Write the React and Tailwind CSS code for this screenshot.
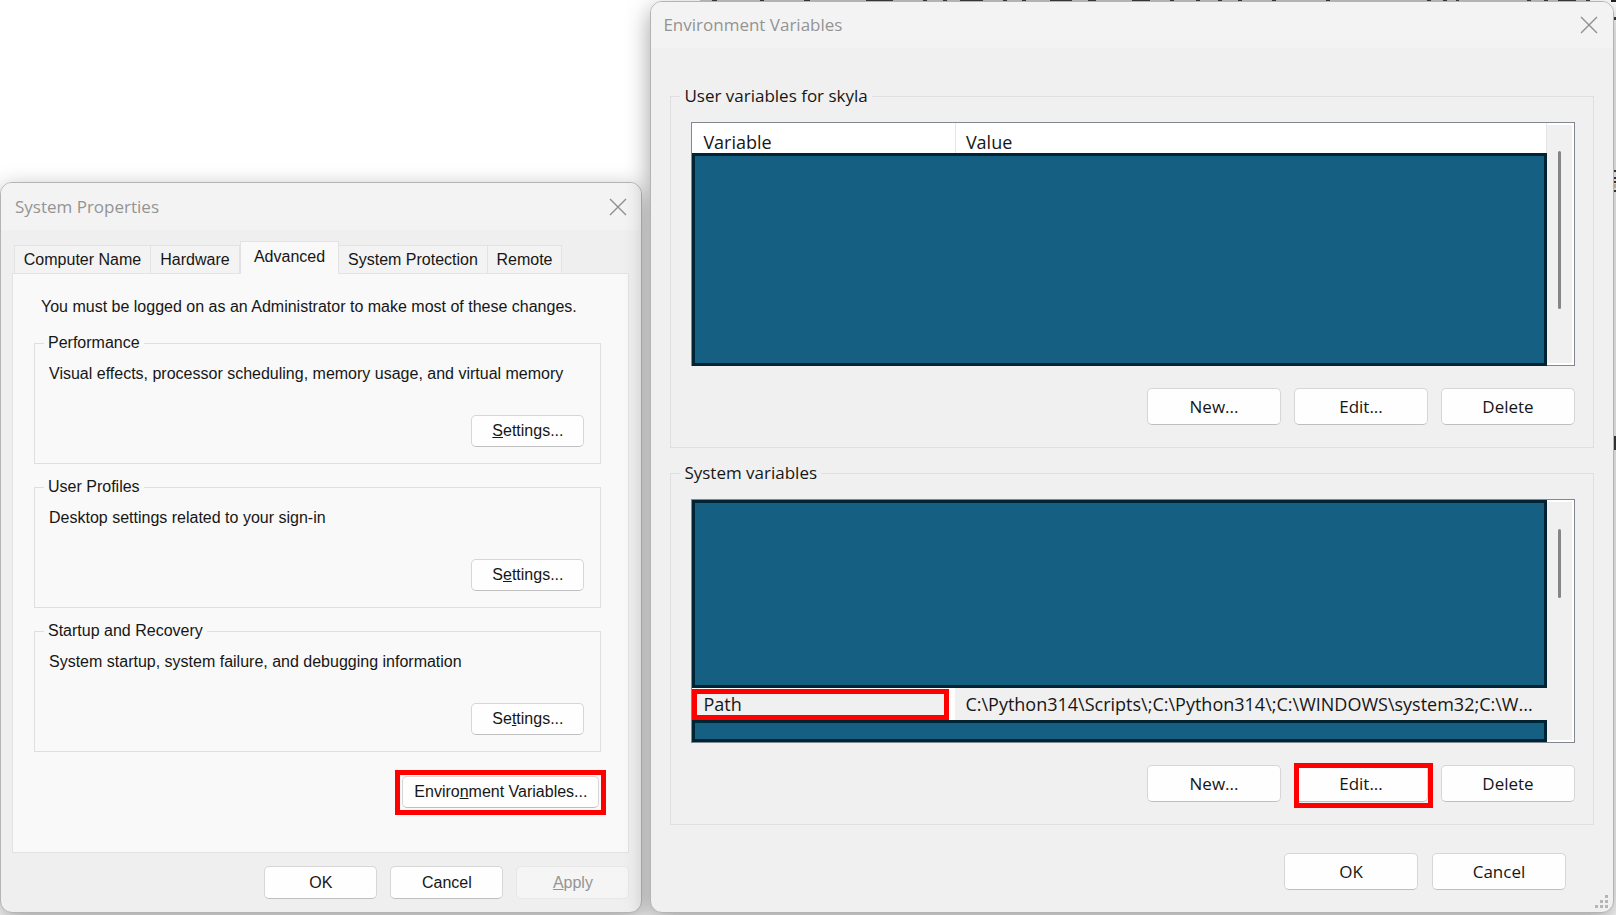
const dialogButton =
  "flex items-center justify-center rounded-[5px] border border-[#d6d6d6] border-b-[#bfbfbf] bg-[#fefefe]";

function CloseIcon() {
  return (
    <svg viewBox="0 0 18 18" className="h-[18px] w-[18px]" fill="none" stroke="#8f8f8f" strokeWidth="1.4" aria-hidden="true">
      <path d="M1 1 17 17M17 1 1 17" />
    </svg>
  );
}

function TitleBar({ title, className }) {
  return (
    <header className={`flex items-center justify-between bg-[#f3f3f3] font-['Open_Sans','Noto_Sans',sans-serif] text-[17px] text-[#949494] ${className}`}>
      <h1>{title}</h1>
      <button type="button" aria-label={`Close ${title}`}>
        <CloseIcon />
      </button>
    </header>
  );
}

function SettingsGroup({ title, description, label }) {
  return (
    <fieldset className="mb-[11px] flex h-[133px] flex-col border border-[#dfdfdf]">
      <legend className="ml-[9px] px-1 leading-6">{title}</legend>
      <div className="flex h-[108px] flex-col justify-between pb-4 pl-[14px] pr-4 pt-[7px]">
        <p className="leading-6">{description}</p>
        <button type="button" className={`${dialogButton} h-8 w-[113px] self-end`}>
          <span>{label}</span>
        </button>
      </div>
    </fieldset>
  );
}

function SystemProperties() {
  const tab = "h-[28px] border border-b-0 border-[#e3e3e3] bg-[#f3f3f3]";
  return (
    <section className="relative self-end overflow-hidden rounded-xl border border-[#b4b4b4] bg-[#efefef] font-['Liberation_Sans',Arial,sans-serif] text-base text-[#161616] shadow-[0_8px_24px_rgba(0,0,0,0.38)]">
      <TitleBar title="System Properties" className="h-[47px] pl-[14px] pr-[14px]" />
      <nav className="flex h-[43px] items-end pl-[13px]" role="tablist">
        <button type="button" role="tab" className={`${tab} w-[137px]`}>Computer Name</button>
        <button type="button" role="tab" className={`${tab} w-[89px] border-l-0`}>Hardware</button>
        <button type="button" role="tab" aria-selected="true" className="relative z-10 -mb-px h-[33px] w-[99px] border-x border-t border-[#e3e3e3] bg-[#f9f9f9] pb-[2px]">
          Advanced
        </button>
        <button type="button" role="tab" className={`${tab} w-[149px] border-l-0`}>System Protection</button>
        <button type="button" role="tab" className={`${tab} w-[74px] border-l-0`}>Remote</button>
      </nav>
      <div className="ml-[11px] mr-3 border border-[#e3e3e3] bg-[#f9f9f9] pb-[37px] pl-[21px] pr-[27px] pt-5">
        <p className="mb-[11px] pl-[7px] leading-[26px]">
          You must be logged on as an Administrator to make most of these changes.
        </p>
        <SettingsGroup
          title="Performance"
          description="Visual effects, processor scheduling, memory usage, and virtual memory"
          label={<><u>S</u>ettings...</>}
        />
        <SettingsGroup
          title="User Profiles"
          description="Desktop settings related to your sign-in"
          label={<>S<u>e</u>ttings...</>}
        />
        <SettingsGroup
          title="Startup and Recovery"
          description="System startup, system failure, and debugging information"
          label={<>Se<u>t</u>tings...</>}
        />
        <div className="-mr-[5px] mt-[18px] flex justify-end">
          <div className="border-[5px] border-[#ff0000] px-[2px] pb-[2px] pt-px">
            <button type="button" className={`${dialogButton} h-8 w-[197px]`}>
              <span>Enviro<u>n</u>ment Variables...</span>
            </button>
          </div>
        </div>
      </div>
      <footer className="flex justify-end gap-[13px] pb-[13px] pr-3 pt-[13px]">
        <button type="button" className={`${dialogButton} h-[33px] w-[113px]`}>OK</button>
        <button type="button" className={`${dialogButton} h-[33px] w-[113px]`}>Cancel</button>
        <button type="button" disabled className="flex h-[33px] w-[113px] items-center justify-center rounded-[5px] border border-[#e8e8e8] bg-[#f5f5f5] text-[#949494]">
          <span><u>A</u>pply</span>
        </button>
      </footer>
    </section>
  );
}

function MaskRow({ className }) {
  return (
    <tr>
      <td colSpan={2} className="p-0">
        <div className={`border-[3px] border-[#002433] bg-[#156082] ${className}`} />
      </td>
    </tr>
  );
}

function VariableList({ label, thumb, children }) {
  return (
    <div className="flex h-[244px] items-start border border-[#828790] bg-white">
      <table aria-label={label} className="min-w-0 flex-1 table-fixed border-collapse text-left">
        <colgroup>
          <col className="w-[263px]" />
          <col />
        </colgroup>
        {children}
      </table>
      <div className="my-[2px] mr-[2px] flex h-[238px] w-[25px] justify-center bg-[#f0f0f0]">
        <div className={`w-[3px] rounded-full bg-[#858585] ${thumb}`} />
      </div>
    </div>
  );
}

function VariableGroup({ title, thumb, highlightEdit, children }) {
  const button = `${dialogButton} h-[37px] w-[134px]`;
  return (
    <fieldset className="mb-[13px] ml-[19px] mr-[19px] border border-[#dfdfdf] pb-[22px]">
      <legend className="ml-[9px] px-1 leading-6">{title}</legend>
      <div className="pl-5 pr-[18px] pt-[14px]">
        <VariableList label={title} thumb={thumb}>{children}</VariableList>
        <div className="mt-[22px] flex justify-end gap-[13px]">
          <button type="button" className={button}>New...</button>
          <div className="relative">
            <button type="button" className={button}>Edit...</button>
            {highlightEdit && (
              <span className="pointer-events-none absolute -bottom-[6px] -right-[5px] -top-[2px] left-0 border-[5px] border-[#ff0000]" />
            )}
          </div>
          <button type="button" className={button}>Delete</button>
        </div>
      </div>
    </fieldset>
  );
}

function ResizeGrip() {
  return (
    <svg viewBox="0 0 13 13" className="absolute bottom-1 right-[5px] h-[13px] w-[13px]" fill="#b5b5b5" aria-hidden="true">
      <path d="M10 0h3v3h-3zM5 5h3v3h-3zM10 5h3v3h-3zM0 10h3v3h-3zM5 10h3v3h-3zM10 10h3v3h-3z" />
    </svg>
  );
}

function EnvironmentVariables() {
  return (
    <section className="relative mt-px self-start overflow-hidden rounded-xl border border-[#b4b4b4] bg-[#f0f0f0] font-['Open_Sans','Noto_Sans',sans-serif] text-[17px] text-[#161616] shadow-[0_8px_24px_rgba(0,0,0,0.38)]">
      <TitleBar title="Environment Variables" className="mb-9 h-[46px] pl-3 pr-[15px]" />
      <VariableGroup title="User variables for skyla" thumb="mt-[26px] h-[158px]">
        <thead>
          <tr className="h-[30px] text-lg leading-[22px]">
            <th className="border-r border-[#e5e5e5] p-0 pl-[11px] pt-[8px] font-normal">Variable</th>
            <th className="border-r border-[#e5e5e5] p-0 pl-[10px] pt-[8px] font-normal">Value</th>
          </tr>
        </thead>
        <tbody>
          <MaskRow className="h-[213px]" />
        </tbody>
      </VariableGroup>
      <VariableGroup title="System variables" thumb="mt-[27px] h-[69px]" highlightEdit>
        <tbody>
          <MaskRow className="h-[188px]" />
          <tr className="h-8 text-lg leading-[21px]">
            <td className="p-0">
              <div className="mr-[6px] h-[31px] border-[5px] border-[#ff0000] bg-[#f0f0f0] pl-[6px]">Path</div>
            </td>
            <td className="truncate bg-[#f0f0f0] p-0 pl-[10px]">
              C:\Python314\Scripts\;C:\Python314\;C:\WINDOWS\system32;C:\W...
            </td>
          </tr>
          <MaskRow className="h-[22px]" />
        </tbody>
      </VariableGroup>
      <footer className="flex justify-end gap-[14px] pb-[22px] pr-[47px] pt-[15px]">
        <button type="button" className={`${dialogButton} h-[37px] w-[134px]`}>OK</button>
        <button type="button" className={`${dialogButton} h-[37px] w-[134px]`}>Cancel</button>
      </footer>
      <ResizeGrip />
    </section>
  );
}

function BackgroundMarks() {
  return (
    <>
      <svg viewBox="0 0 916 2" preserveAspectRatio="none" className="absolute right-0 top-0 h-[2px] w-[916px]" aria-hidden="true">
        <path d="M0 0h890v2H0z" fill="#c4c4c4" />
        <path d="M12 0h5v2h-5zM60 0h4v2h-4zM104 0h6v2h-6zM166 0h27v2h-27zM223 0h4v2h-4zM243 0h4v2h-4zM260 0h23v2h-23zM303 0h4v2h-4zM322 0h4v2h-4zM350 0h22v2h-22zM388 0h8v2h-8zM432 0h18v2h-18zM470 0h4v2h-4zM496 0h4v2h-4zM518 0h4v2h-4zM538 0h4v2h-4zM572 0h4v2h-4zM626 0h4v2h-4zM727 0h4v2h-4zM743 0h4v2h-4zM756 0h3v2h-3zM827 0h4v2h-4zM844 0h4v2h-4zM858 0h18v2h-18zM886 0h4v2h-4z" fill="#3d3a3a" />
        <path d="M911 0h5v2h-5z" fill="#2b2018" />
      </svg>
      <svg viewBox="0 0 3 450" className="absolute right-0 top-0 h-[450px] w-[3px]" aria-hidden="true">
        <path d="M0 17h3v3H0zM0 170h3v2H0zM0 177h3v2H0zM0 181h3v2H0zM0 190h3v2H0zM1 436h2v14H1z" fill="#3b3b3b" />
        <path d="M0 184h3v4H0z" fill="#e8cf9a" />
      </svg>
    </>
  );
}

export default function App() {
  return (
    <main className="relative grid min-h-screen grid-cols-[2fr_3fr] gap-2 overflow-hidden bg-white pb-1 pr-[2px]">
      <BackgroundMarks />
      <SystemProperties />
      <EnvironmentVariables />
    </main>
  );
}
